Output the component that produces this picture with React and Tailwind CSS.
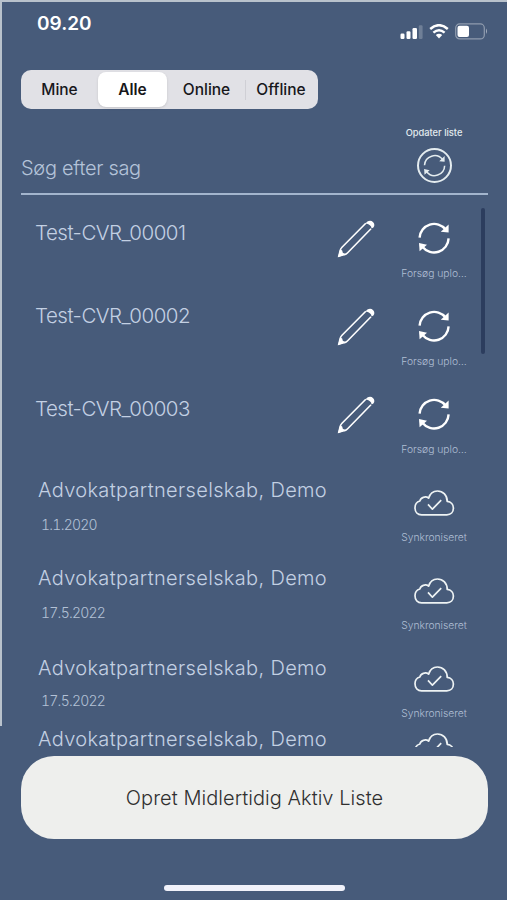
import React, { useState } from 'react'

const tabs = [
    { name: "Mine", width: "w-[73px]" },
    { name: "Alle", width: "ml-[2px] mr-px w-[69px]" },
    { name: "Online", width: "w-[77px]" },
    { name: "Offline", width: "w-[70px]" },
];

const cases = [
    { id: 1, title: "Test-CVR_00001", pending: true, row: "h-[88px]", offset: "pt-[13px] pl-[14px]" },
    { id: 2, title: "Test-CVR_00002", pending: true, row: "h-[88px]", offset: "pt-[8px] pl-[14px]" },
    { id: 3, title: "Test-CVR_00003", pending: true, row: "h-[88px]", offset: "pt-[13px] pl-[14px]" },
    { id: 4, title: "Advokatpartnerselskab, Demo", date: "1.1.2020", row: "h-[88px]", offset: "pt-[6px] pl-[17px]", gap: "mt-[13px]" },
    { id: 5, title: "Advokatpartnerselskab, Demo", date: "17.5.2022", row: "h-[88px]", offset: "pt-[6px] pl-[17px]", gap: "mt-[13px]" },
    { id: 6, title: "Advokatpartnerselskab, Demo", date: "17.5.2022", row: "h-[67px]", offset: "pt-[8px] pl-[17px]", gap: "mt-[11px]" },
];

const SyncArrows = ({ className, strokeWidth = 2.4 }) => (
    <svg viewBox="0 0 36 36" className={className} fill="none" stroke="currentColor" strokeWidth={strokeWidth}>
        <path d="M3.6 17.6A14.6 14.6 0 0 1 29.6 9.4" />
        <path d="M32.6 18.4A14.6 14.6 0 0 1 6.6 27" />
        <path d="M32.6 4.4V12.6L24.8 11.8Z" fill="currentColor" stroke="none" />
        <path d="M3 23L11 24.8L3.6 31.2Z" fill="currentColor" stroke="none" />
    </svg>
)

const Pencil = () => (
    <svg viewBox="0 0 40 40" className="size-10" fill="none" stroke="currentColor" strokeWidth="1.6">
        <path d="M29.8 4.2L6 28.2Q4.6 29.6 4.2 31.4L2.8 37.2L8.6 35.6Q10.2 35.2 11.4 34L35 9.8" />
        <path d="M29.4 4.6L31.4 2.6Q34.6 0.8 37.2 3.2Q39.4 5.8 37.4 8.6L35.6 9.6Q35.2 5.4 29.4 4.6Z" fill="currentColor" stroke="none" />
        <path d="M2 38.2L4.2 30.2L6.2 31.6L6.8 33.8L9.8 35.2Z" fill="currentColor" stroke="none" />
    </svg>
)

const CloudCheck = () => (
    <svg viewBox="0 0 44 30" className="h-[30px] w-11" fill="none" stroke="currentColor" strokeWidth="1.7" strokeLinejoin="round">
        <path d="M9.6 26.8C5.6 26.8 3 23.8 3 19.8C3 16.4 5 13.8 7.9 13C8.4 9.6 13.6 7.6 16.6 10.2C18 5.4 21.2 3 25.4 3C31 3 35.3 7.4 35.2 13.4C39 13.8 41.4 16.6 41.4 20C41.4 24 38.8 26.8 34.8 26.8Z" />
        <path d="M16 16.4L20.4 21.2L29.2 12.2" />
    </svg>
)

const StatusBar = () => (
    <div className="flex h-[46px] items-start justify-between pl-[37px] pr-[19px] pt-[10px] font-['Inter'] text-white">
        <span className="text-[19px] font-semibold leading-6">09.20</span>
        <div className="flex items-center gap-[6px] pt-[11px]">
            <svg viewBox="0 0 23 16" className="h-4 w-[23px]" fill="currentColor">
                <rect x="0.5" y="9.5" width="4" height="5.5" rx="1.2" />
                <rect x="6.5" y="7.3" width="4" height="7.7" rx="1.2" />
                <rect x="12.5" y="4" width="4.5" height="11" rx="1.2" />
                <rect x="18.8" y="1.2" width="3.8" height="13.8" rx="1.2" opacity="0.22" />
            </svg>
            <svg viewBox="0 0 20 16" className="h-4 w-5" fill="none" stroke="currentColor" strokeWidth="2.5">
                <path d="M1.2 5Q10 -2.6 18.8 5" />
                <path d="M4.4 8.6Q10 4 15.6 8.6" />
                <path d="M6.8 11Q10 8.6 13.2 11L10 14.6Z" fill="currentColor" stroke="none" />
            </svg>
            <svg viewBox="0 0 33 17" className="h-[17px] w-[33px]">
                <rect x="0.7" y="0.9" width="28.6" height="15" rx="4" fill="none" stroke="white" strokeOpacity="0.4" strokeWidth="1.2" />
                <rect x="2.5" y="2.8" width="11.5" height="11.2" rx="2" fill="white" />
                <path d="M31 5.5Q33 8.2 31 11Z" fill="white" opacity="0.5" />
            </svg>
        </div>
    </div>
)

const CaseRow = ({ item }) => (
    <div className={`flex shrink-0 ${item.row}`}>
        <div className={`flex-1 whitespace-nowrap ${item.offset}`}>
            <p className={`font-light leading-6 text-[#c3d0e3] ${item.pending ? "text-[20.5px] tracking-[-0.5px]" : "text-[20px] tracking-[0.34px]"}`}>
                {item.title}
            </p>
            {item.date && (
                <p className={`pl-[3px] text-[14px] font-light tabular-nums leading-5 tracking-[-0.75px] text-[#b3c1d6] ${item.gap}`}>{item.date}</p>
            )}
        </div>
        {item.pending && (
            <button className="mr-[16px] mt-[11px] size-10 text-white">
                <Pencil />
            </button>
        )}
        <div className="mr-[31px] flex w-[84px] flex-col items-center text-[#eef3f4]">
            <div className="flex h-[54px] shrink-0 items-start justify-center">
                {item.pending ? (
                    <SyncArrows className="mt-[12px] size-9 text-white" />
                ) : (
                    <div className="mt-[16px]"><CloudCheck /></div>
                )}
            </div>
            <span className="mt-[3px] whitespace-nowrap text-[10.3px] font-light leading-4 text-[#b0bfd4]">
                {item.pending ? "Forsøg uplo…" : "Synkroniseret"}
            </span>
        </div>
    </div>
)

const App = () => {

    const [active, setActive] = useState("Alle")

    return (
        <div className="relative flex h-[900px] w-[507px] flex-col overflow-hidden border-t-2 border-[#b9c2cc] bg-[#475b7a] font-['Inter',sans-serif]">
            <div className="absolute left-0 top-0 h-[724px] w-[2px] bg-[#b9c2cc]" />

            <StatusBar />

            {/* Filter */}
            <div className="ml-[21px] mt-[22px] flex h-[39px] w-[297px] items-center rounded-[10px] bg-[#e1e1e6] p-[2px] text-[15.5px] font-medium text-[#17171b]">
                {tabs.map((tab) => (
                    <React.Fragment key={tab.name}>
                        {tab.name === "Offline" && <div className="h-5 w-px bg-[#cfcfd5]" />}
                        <button
                            className={`h-[35px] shrink-0 rounded-[8px] ${tab.width} ${active === tab.name ? "bg-white font-semibold shadow-sm" : ""}`}
                            onClick={() => setActive(tab.name)}
                        >
                            {tab.name}
                        </button>
                    </React.Fragment>
                ))}
            </div>

            {/* Search */}
            <div className="ml-[21px] mr-[19px] mt-[16px] flex h-[70px] shrink-0 justify-between border-b-2 border-[#a3b5cd]">
                <p className="pt-[31px] text-[20px] font-light leading-6 tracking-[-0.3px] text-[#b4c3d9]">Søg efter sag</p>
                <div className="flex w-[108px] flex-col items-center text-[#e4ecef]">
                    <span className="text-[9.3px] font-medium leading-4">Opdater liste</span>
                    <button className="mt-[7px] flex size-[35px] items-center justify-center rounded-full border-2 border-current">
                        <SyncArrows className="size-[25px]" strokeWidth={2.2} />
                    </button>
                </div>
            </div>

            {/* Case list */}
            <div className="relative ml-[21px] flex h-[552px] shrink-0 flex-col pt-[13px]">
                {cases.map((item) => (
                    <CaseRow item={item} key={item.id} />
                ))}
                {/* next case, only its top edge is scrolled into view */}
                <div className="flex h-8 shrink-0 items-start justify-between pl-[17px] pr-[51px]">
                    <p className="whitespace-nowrap pt-[12px] text-[20px] font-light leading-6 tracking-[0.34px] text-[#c3d0e3]">Advokatpartnerselskab, Demo</p>
                    <div className="mt-[16px] h-4 overflow-hidden text-[#eef3f4]"><CloudCheck /></div>
                </div>
                <div className="absolute right-[22px] top-[13px] h-[146px] w-[4px] rounded-full bg-[#2c3d5e]" />
            </div>

            <button className="ml-[21px] mr-[19px] mt-[9px] h-[83px] shrink-0 rounded-[33px] bg-[#eeefed] text-[20px] font-light tracking-[0.05px] text-[#303030]">
                Opret Midlertidig Aktiv Liste
            </button>

            <div className="ml-[164px] mt-[46px] h-[6px] w-[181px] shrink-0 rounded-full bg-[#f1f2fa]" />
        </div>
    )
}

export default App;
